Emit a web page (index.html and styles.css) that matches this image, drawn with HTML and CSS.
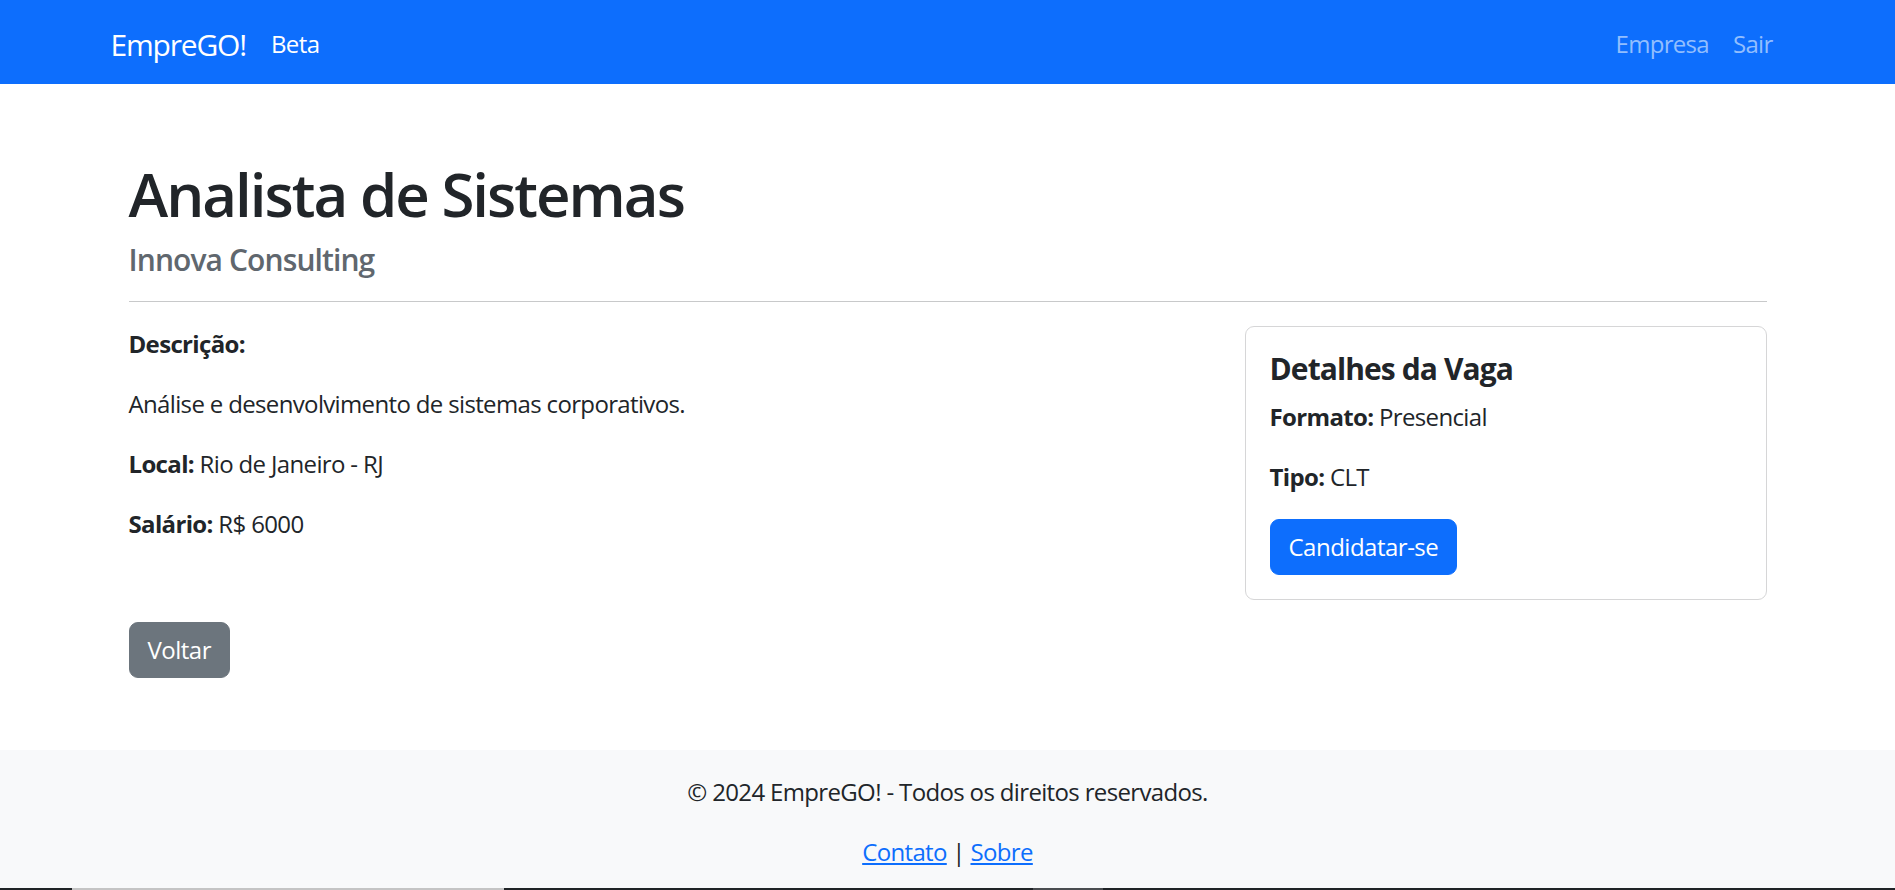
FILE: index.html
```html
<!DOCTYPE html>
<html lang="pt-BR">
<head>
<meta charset="utf-8">
<title>Analista de Sistemas - EmpreGO!</title>
<link rel="stylesheet" href="styles.css">
</head>
<body>
<nav class="navbar">
  <div class="nav-inner">
    <div class="nav-left">
      <a class="brand" href="#">EmpreGO!</a>
      <span class="beta">Beta</span>
    </div>
    <div class="nav-links">
      <a class="nav-link" href="#">Empresa</a>
      <a class="nav-link" href="#">Sair</a>
    </div>
  </div>
</nav>

<main class="container">
  <h1 class="title">Analista de Sistemas</h1>
  <h4 class="company">Innova Consulting</h4>
  <hr class="divider">
  <div class="row">
    <div class="col-main">
      <p><strong>Descrição:</strong></p>
      <p>Análise e desenvolvimento de sistemas corporativos.</p>
      <p><strong>Local:</strong> Rio de Janeiro - RJ</p>
      <p><strong>Salário:</strong> R$ 6000</p>
    </div>
    <div class="col-side">
      <div class="card">
        <h5 class="card-title">Detalhes da Vaga</h5>
        <p><strong>Formato:</strong> Presencial</p>
        <p><strong>Tipo:</strong> CLT</p>
        <a class="btn btn-primary" href="#">Candidatar-se</a>
      </div>
    </div>
  </div>
  <div class="back">
    <a class="btn btn-secondary" href="#">Voltar</a>
  </div>
</main>

<footer class="footer">
  <p>© 2024 EmpreGO! - Todos os direitos reservados.</p>
  <p><a href="#">Contato</a> | <a href="#">Sobre</a></p>
</footer>

<div class="taskbar-edge">
  <span class="seg seg-a"></span>
  <span class="seg seg-b"></span>
</div>
</body>
</html>
```

FILE: styles.css
```css
* {
  box-sizing: border-box;
}

html, body {
  margin: 0;
  padding: 0;
}

body {
  font-family: "Open Sans", "Noto Sans", "Liberation Sans", sans-serif;
  font-size: 24px;
  line-height: 1.5;
  color: #212529;
  background: #ffffff;
}

a {
  text-decoration: none;
}

/* Navbar */
.navbar {
  background: #0d6efd;
  padding: 14px 0 10px;
}

.nav-inner {
  width: 1710px;
  margin: 0 auto;
  padding: 0 18px;
  display: flex;
  align-items: center;
  justify-content: space-between;
}

.nav-left {
  display: flex;
  align-items: center;
}

.brand {
  color: #ffffff;
  font-size: 30px;
  line-height: 45px;
  padding: 7.5px 0;
  margin-right: 25px;
  letter-spacing: -1.2px;
}

.beta {
  color: #ffffff;
  font-size: 24px;
  line-height: 36px;
  letter-spacing: -0.6px;
}

.nav-links {
  display: flex;
  align-items: center;
}

.nav-link {
  color: #92befe;
  padding: 12px;
  line-height: 36px;
  letter-spacing: -0.7px;
}

/* Main */
.container {
  width: 1710px;
  margin: 74px auto 0;
  padding: 0 36px;
}

.title {
  font-size: 60px;
  font-weight: 560;
  line-height: 1.2;
  margin: 0 0 12px;
  letter-spacing: -2px;
}

.company {
  font-size: 30px;
  font-weight: 600;
  line-height: 1.2;
  color: #60676e;
  margin: 10px 0 0;
  letter-spacing: -0.9px;
}

.divider {
  border: 0;
  border-top: 1px solid #c8c9ca;
  margin: 23px 0 24px;
}

.row {
  display: grid;
  grid-template-columns: 1fr 522px;
  column-gap: 36px;
  align-items: start;
}

p {
  margin: 0 0 24px;
  letter-spacing: -0.65px;
}

strong {
  font-weight: 700;
}

.card {
  border: 1px solid #d6d6d7;
  border-radius: 9px;
  padding: 24px;
}

.card-title {
  font-size: 30px;
  font-weight: 700;
  line-height: 1.2;
  margin: 0 0 12px;
  letter-spacing: -0.9px;
}

.btn {
  display: inline-block;
  font-size: 24px;
  line-height: 36px;
  padding: 9px 18px;
  border: 1.5px solid transparent;
  border-radius: 9px;
  color: #ffffff;
  letter-spacing: -0.5px;
}

.btn-primary {
  background: #0d6efd;
  border-color: #0d6efd;
}

.btn-secondary {
  background: #6c757d;
  border-color: #6c757d;
}

.back {
  margin-top: 22px;
}

/* Footer */
.footer {
  margin-top: 72px;
  background: #f8f9fa;
  text-align: center;
  padding: 24px 0;
}

.footer a {
  color: #0d6efd;
  text-decoration: underline;
}

/* Screenshot bottom edge (OS taskbar sliver) */
.taskbar-edge {
  position: fixed;
  left: 0;
  right: 0;
  bottom: 0;
  height: 2px;
  background: #1f2326;
}

.seg {
  position: absolute;
  top: 0;
  height: 2px;
}

.seg-a {
  left: 72px;
  width: 432px;
  background: #c4c4c4;
}

.seg-b {
  left: 1033px;
  width: 70px;
  background: #4a4d50;
}
```
